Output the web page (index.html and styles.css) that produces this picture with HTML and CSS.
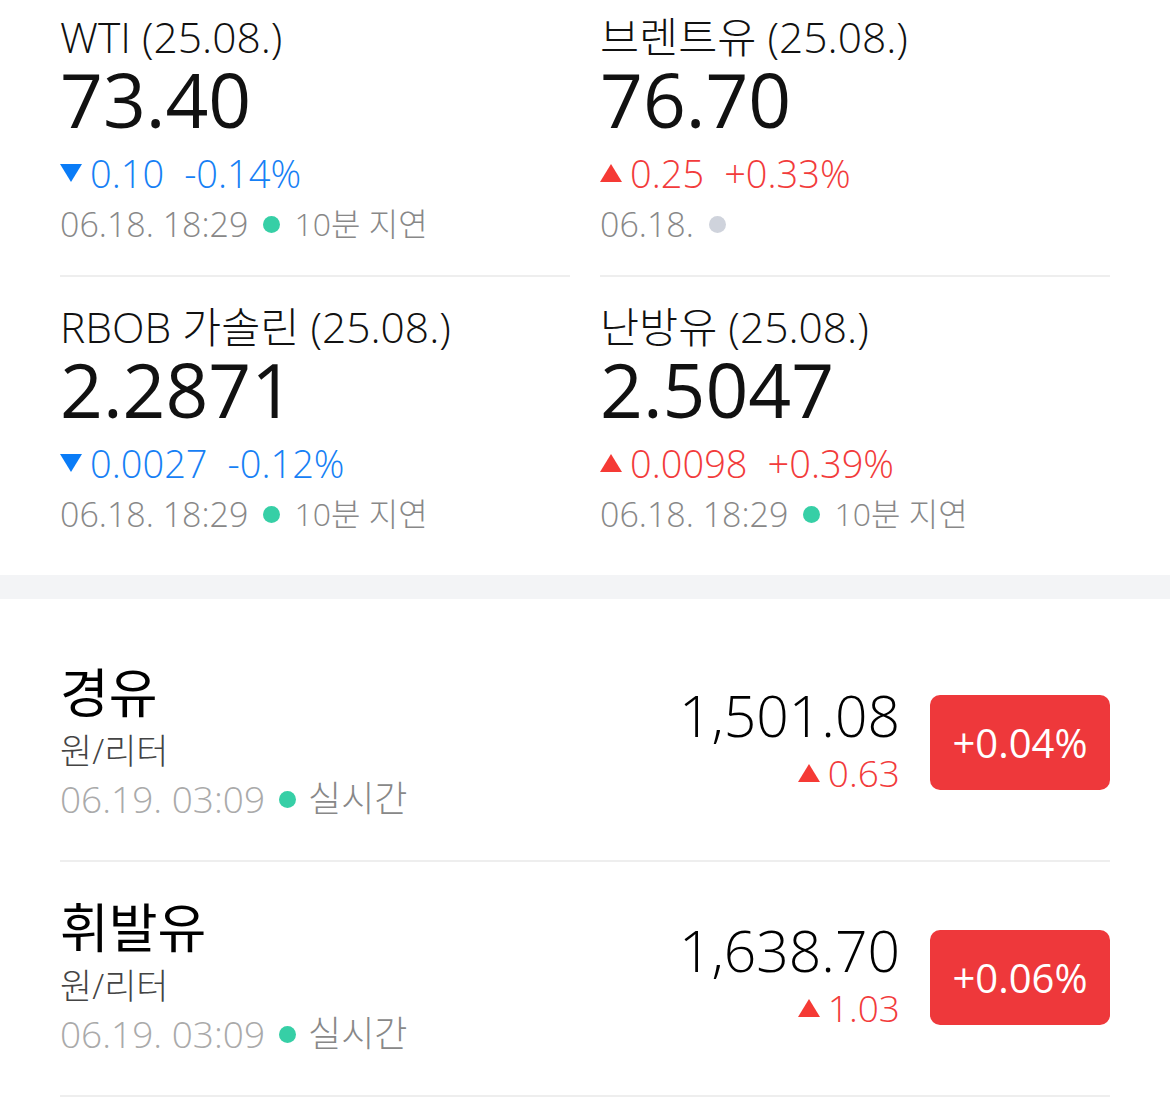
FILE: index.html
```html
<!doctype html>
<html lang="ko">
<head>
	<meta charset="UTF-8">
	<title>국제 유가</title>
	<link rel="stylesheet" href="styles.css">
</head>
<body>
	<div class="futures">
		<div class="quote">
			<div class="q-title">WTI (25.08.)</div>
			<div class="q-price">73.40</div>
			<div class="q-change down"><span class="tri"></span>0.10<span class="pct">-0.14%</span></div>
			<div class="q-time">06.18. 18:29<span class="dot"></span><span class="delay">10분 지연</span></div>
		</div>
		<div class="quote">
			<div class="q-title">브렌트유 (25.08.)</div>
			<div class="q-price">76.70</div>
			<div class="q-change up"><span class="tri"></span>0.25<span class="pct">+0.33%</span></div>
			<div class="q-time">06.18.<span class="dot off"></span></div>
		</div>
		<div class="quote">
			<div class="q-title">RBOB 가솔린 (25.08.)</div>
			<div class="q-price">2.2871</div>
			<div class="q-change down"><span class="tri"></span>0.0027<span class="pct">-0.12%</span></div>
			<div class="q-time">06.18. 18:29<span class="dot"></span><span class="delay">10분 지연</span></div>
		</div>
		<div class="quote">
			<div class="q-title">난방유 (25.08.)</div>
			<div class="q-price">2.5047</div>
			<div class="q-change up"><span class="tri"></span>0.0098<span class="pct">+0.39%</span></div>
			<div class="q-time">06.18. 18:29<span class="dot"></span><span class="delay">10분 지연</span></div>
		</div>
	</div>

	<div class="band"></div>

	<div class="fuels">
		<div class="fuel">
			<div class="f-info">
				<div class="f-name">경유</div>
				<div class="f-unit">원/리터</div>
				<div class="f-time"><span class="num">06.19. 03:09</span><span class="dot"></span><span class="live">실시간</span></div>
			</div>
			<div class="f-right">
				<div class="f-values">
					<div class="f-price">1,501.08</div>
					<div class="f-change"><span class="tri"></span>0.63</div>
				</div>
				<div class="badge">+0.04%</div>
			</div>
		</div>
		<div class="fuel">
			<div class="f-info">
				<div class="f-name">휘발유</div>
				<div class="f-unit">원/리터</div>
				<div class="f-time"><span class="num">06.19. 03:09</span><span class="dot"></span><span class="live">실시간</span></div>
			</div>
			<div class="f-right">
				<div class="f-values">
					<div class="f-price">1,638.70</div>
					<div class="f-change"><span class="tri"></span>1.03</div>
				</div>
				<div class="badge">+0.06%</div>
			</div>
		</div>
	</div>
</body>
</html>
```

FILE: styles.css
```css
*{
	margin:0;
	padding:0;
	box-sizing:border-box;
}

body{
	background:#fff;
	color:#111;
	font-family:"Open Sans", "Noto Sans CJK KR", sans-serif;
	font-weight:300;
}

/* 선물 시세 2열 */
.futures{
	display:grid;
	grid-template-columns:1fr 1fr;
	column-gap:30px;
	padding:0 60px 10px;
}

.quote{
	padding:24px 0 28px;
	border-bottom:2px solid #eeeeee;
}

.quote:nth-child(-n+2){
	padding-top:11px;
}

.quote:nth-child(n+3){
	border-bottom:none;
}

.q-title{
	font-size:42.5px;
	line-height:52px;
	color:#111;
}

.q-price{
	font-size:75px;
	line-height:72px;
	font-weight:400;
	color:#111;
}

.q-change{
	display:flex;
	align-items:center;
	font-size:38px;
	line-height:48px;
	margin-top:14px;
}

.q-change .pct{
	margin-left:20px;
}

.down{ color:#1680f5; }
.up{ color:#f23b3b; }

.tri{
	display:inline-block;
	width:0;
	height:0;
	margin-right:8px;
	border-left:11px solid transparent;
	border-right:11px solid transparent;
}

.down .tri{
	border-top:18px solid #0a7cf7;
}

.up .tri, .f-change .tri{
	border-bottom:18px solid #f53a35;
}

.q-time{
	display:flex;
	align-items:center;
	font-size:34px;
	line-height:46px;
	margin-top:4px;
	color:#888;
}

.q-time .delay{
	font-size:32px;
}

.dot{
	display:inline-block;
	width:17px;
	height:17px;
	border-radius:50%;
	background:#36cfa6;
	margin:0 14px 0 15px;
}

.dot.off{
	background:#cfd3dc;
}

.band{
	height:24px;
	background:#f3f4f6;
}

/* 국내 유가 */
.fuels{
	padding:28px 60px 0;
}

.fuel{
	display:flex;
	justify-content:space-between;
	align-items:center;
	padding:34px 0 37px;
	border-bottom:2px solid #eeeeee;
}

.f-name{
	font-size:53px;
	line-height:64px;
	font-weight:400;
	color:#000;
}

.f-unit{
	font-size:35px;
	line-height:44px;
	margin-top:4px;
	color:#444;
}

.f-time{
	display:flex;
	align-items:center;
	font-size:37px;
	line-height:48px;
	margin-top:2px;
	color:#888;
}

.f-time .num{
	color:#aaa;
}

.f-time .live{
	font-size:36px;
}

.f-time .dot{
	margin:0 12px 0 14px;
}

.f-right{
	display:flex;
	align-items:center;
	gap:30px;
}

.f-values{
	text-align:right;
}

.f-price{
	font-size:57px;
	line-height:53px;
	color:#000;
}

.f-change{
	display:flex;
	justify-content:flex-end;
	align-items:center;
	font-size:37px;
	line-height:44px;
	margin-top:9px;
	color:#f23b3b;
}

.f-change .tri{
	margin-right:8px;
}

.badge{
	width:180px;
	height:95px;
	border-radius:10px;
	background:#ee383b;
	color:#fff;
	font-size:40px;
	font-weight:400;
	display:flex;
	align-items:center;
	justify-content:center;
}
```
